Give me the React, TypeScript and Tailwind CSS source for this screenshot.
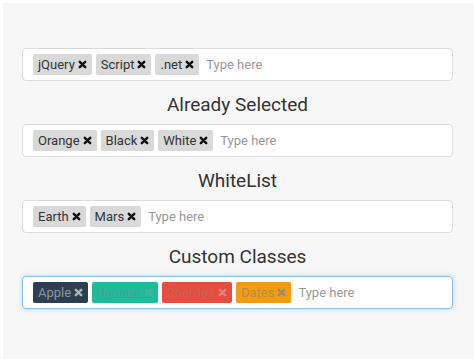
import React from "react";

type Tag = { label: string; bg: string; text: string; icon: string };

const plain = (label: string): Tag => ({ label, bg: "bg-[#d9d9d9]", text: "text-[#333]", icon: "#111" });

const CloseIcon = ({ color }: { color: string }) => (
  <svg width="9" height="9" viewBox="0 0 10 10" className="ml-[3px] shrink-0">
    <path d="M2 2 L8 8 M8 2 L2 8" stroke={color} strokeWidth="2.8" strokeLinecap="round" />
  </svg>
);

const TagInput = ({ tags, focused = false }: { tags: Tag[]; focused?: boolean }) => (
  <div
    className={`flex items-center gap-[4px] h-[33px] rounded-[4px] bg-white pl-[10px] border ${
      focused
        ? "border-[#8fbfe3] shadow-[0_0_5px_rgba(102,175,233,0.45)]"
        : "border-[#dcdcdc]"
    }`}
  >
    {tags.map((t) => (
      <span
        key={t.label}
        className={`flex items-center h-[21px] px-[5px] rounded-[2px] text-[13px] ${t.bg} ${t.text}`}
      >
        {t.label}
        <CloseIcon color={t.icon} />
      </span>
    ))}
    <span className="ml-[3px] text-[13px] text-[#999]">Type here</span>
  </div>
);

const Heading = ({ children }: { children: React.ReactNode }) => (
  <h2 className="mt-[11px] mb-[6px] text-center text-[19px] leading-[26px] text-[#333]">{children}</h2>
);

export default function App() {
  return (
    <div className="w-[474px] h-[359px] bg-white pt-[3px] pl-[3px] font-['Roboto',sans-serif]">
      <div className="h-full bg-[#f7f7f7] pt-[45px] pl-[19px] pr-[21px]">
        <TagInput tags={[plain("jQuery"), plain("Script"), plain(".net")]} />
        <Heading>Already Selected</Heading>
        <TagInput tags={[plain("Orange"), plain("Black"), plain("White")]} />
        <Heading>WhiteList</Heading>
        <TagInput tags={[plain("Earth"), plain("Mars")]} />
        <Heading>Custom Classes</Heading>
        <TagInput
          focused
          tags={[
            { label: "Apple", bg: "bg-[#2c3e50]", text: "text-[#8d97a2]", icon: "#a9b1b9" },
            { label: "Banana", bg: "bg-[#1abc9c]", text: "text-[#45a48f]", icon: "#5aa996" },
            { label: "Cherries", bg: "bg-[#e74c3c]", text: "text-[#c0635b]", icon: "#c98a84" },
            { label: "Dates", bg: "bg-[#f39c12]", text: "text-[#b98a4a]", icon: "#9b8a70" },
          ]}
        />
      </div>
    </div>
  );
}
